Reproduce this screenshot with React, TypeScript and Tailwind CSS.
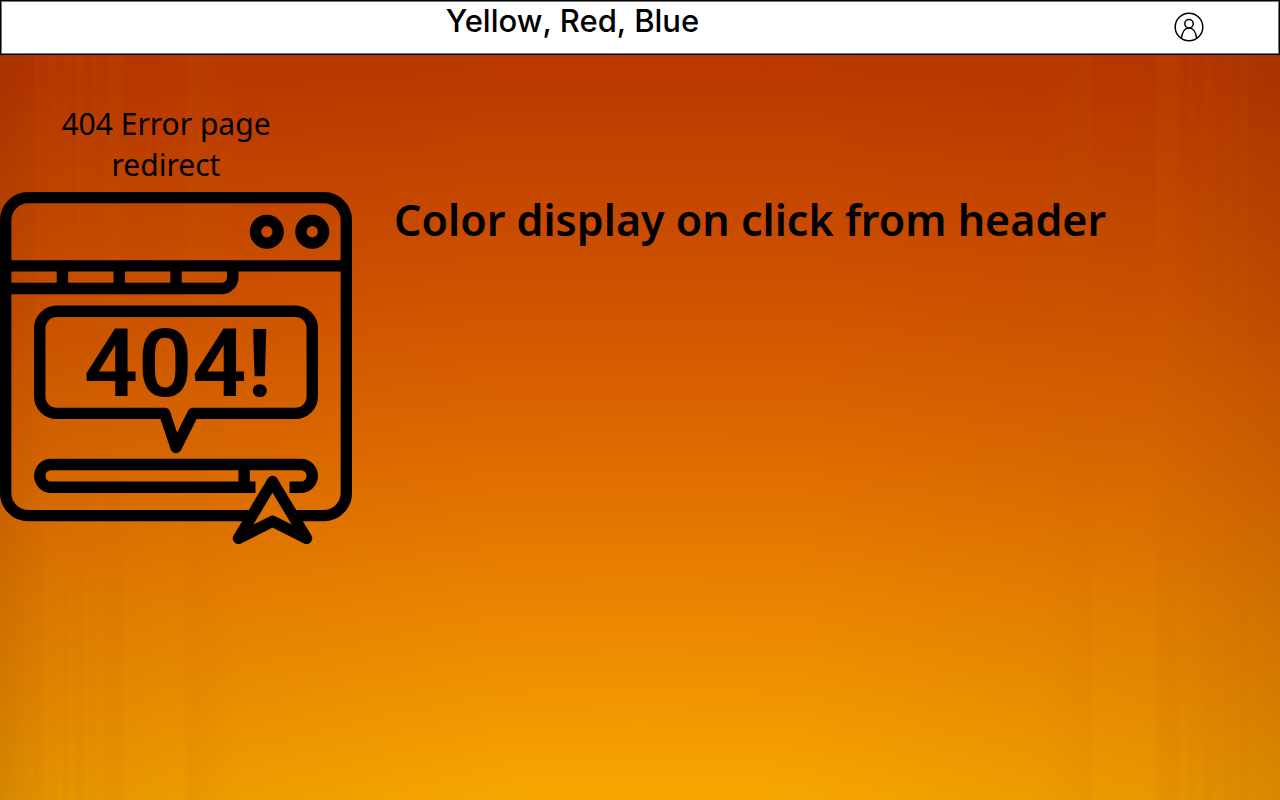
function UserIcon() {
  return (
    <svg viewBox="0 0 30 30" className="size-[30px]" fill="none" stroke="#000" strokeWidth="1.5" aria-hidden="true">
      <circle cx="15" cy="15" r="13.8" />
      <circle cx="15" cy="11.7" r="4.2" />
      <path d="M7.3 26.4C8 20.2 11 15.9 15 15.9s7 4.3 7.7 10.5" />
    </svg>
  );
}

function ErrorWindow() {
  return (
    <svg viewBox="0 0 496 496" className="block size-[352px]" fill="none" stroke="#000" strokeWidth="16" role="img" aria-label="404 browser window">
      <path d="M350 456H40a32 32 0 0 1-32-32V40A32 32 0 0 1 40 8h416a32 32 0 0 1 32 32v384a32 32 0 0 1-32 32h-38" />
      <circle cx="376" cy="56" r="16" />
      <circle cx="440" cy="56" r="16" />
      <path d="M8 104h480M8 136h304a16 16 0 0 0 16-16v-16M88 104v32M168 104v32M248 104v32" />
      <path
        strokeLinejoin="round"
        d="M80 168h336a24 24 0 0 1 24 24v96a24 24 0 0 1-24 24H272l-24 48-16-48H80a24 24 0 0 1-24-24v-96a24 24 0 0 1 24-24z"
      />
      <path d="M360 416H72a16 16 0 0 1 0-32h352a16 16 0 0 1 0 32h-16M344 384v32" />
      <path strokeLinejoin="round" d="M384 408l48 80-48-24-48 24z" />
      <text x="118" y="287" fontSize="134" fontWeight="600" fontFamily="Roboto, sans-serif" fill="#000" stroke="none">
        404!
      </text>
    </svg>
  );
}

const grain =
  "bg-[linear-gradient(90deg,transparent_34px,rgba(200,100,0,0.1)_36px,transparent_46px,rgba(200,100,0,0.08)_54px,transparent_60px,rgba(200,100,0,0.1)_66px,transparent_72px,rgba(200,100,0,0.1)_80px,transparent_88px,rgba(200,100,0,0.08)_94px,transparent_100px,rgba(200,100,0,0.1)_110px,rgba(200,100,0,0.08)_122px,transparent_124px,transparent_184px,rgba(200,100,0,0.1)_188px,transparent_240px),linear-gradient(270deg,transparent_32px,rgba(200,100,0,0.1)_34px,transparent_46px,rgba(200,100,0,0.08)_54px,transparent_62px,rgba(200,100,0,0.1)_72px,transparent_82px,rgba(200,100,0,0.08)_88px,transparent_96px,rgba(200,100,0,0.12)_106px,rgba(200,100,0,0.1)_122px,transparent_126px,transparent_187px,rgba(200,100,0,0.08)_189px,transparent_240px)]";

const background =
  "bg-[linear-gradient(90deg,rgba(90,20,0,0.18)_0%,rgba(90,20,0,0.08)_4%,rgba(90,20,0,0.04)_16%,transparent_40%,transparent_62%,rgba(90,20,0,0.06)_90%,rgba(90,20,0,0.16)_100%),radial-gradient(ellipse_60%_50%_at_50%_100%,transparent_15%,rgba(160,60,0,0.09)_100%),linear-gradient(180deg,#b93500_0px,#be3900_80px,#ca4900_200px,#d45600_300px,#df6600_400px,#e77600_500px,#ed8700_600px,#f29600_700px,#f6a700_800px)]";

export default function App() {
  return (
    <div className={`flex min-h-screen flex-col text-black ${background}`}>
      <header className="flex h-[55px] items-start border border-black bg-white shadow-[inset_0_0_0_1px_#777]">
        <nav aria-label="Colors" className="flex-1 text-center font-['Inter',sans-serif] text-[31px] leading-[40px] font-medium">
          <button type="button">Yellow</button>, <button type="button">Red</button>, <button type="button">Blue</button>
        </nav>
        <button type="button" aria-label="Account" className="mt-[11px] mr-[75px] ml-[30px]">
          <UserIcon />
        </button>
      </header>
      <main className={`flex flex-1 flex-wrap content-start items-start gap-x-[42px] pt-12 ${grain}`}>
        <section className="w-[352px]">
          <p className="w-[332px] px-10 text-center font-['Noto_Sans',sans-serif] text-[30px] leading-[41px]">
            404 Error page redirect
          </p>
          <div className="pt-[7px]">
            <ErrorWindow />
          </div>
        </section>
        <h1 className="pt-[87px] font-['Noto_Sans',sans-serif] text-[43px] leading-[60px] font-semibold">
          Color display on click from header
        </h1>
      </main>
    </div>
  );
}
